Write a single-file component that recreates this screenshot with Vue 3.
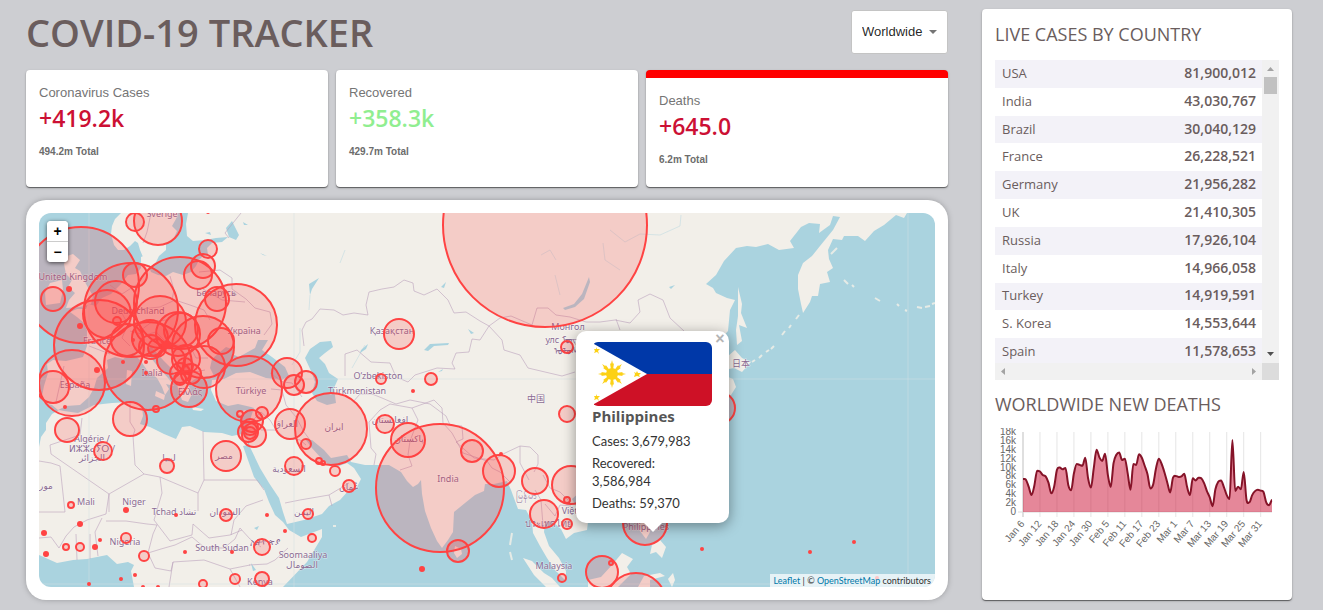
<script setup>
import { computed, ref } from 'vue'

const region = ref('Worldwide')

const cards = [
  { title: 'Coronavirus Cases', value: '+419.2k', total: '494.2m Total', tone: 'bad' },
  { title: 'Recovered', value: '+358.3k', total: '429.7m Total', tone: 'good' },
  { title: 'Deaths', value: '+645.0', total: '6.2m Total', tone: 'bad', active: true },
]

const countries = [
  ['USA', '81,900,012'],
  ['India', '43,030,767'],
  ['Brazil', '30,040,129'],
  ['France', '26,228,521'],
  ['Germany', '21,956,282'],
  ['UK', '21,410,305'],
  ['Russia', '17,926,104'],
  ['Italy', '14,966,058'],
  ['Turkey', '14,919,591'],
  ['S. Korea', '14,553,644'],
  ['Spain', '11,578,653'],
]

// Land masses, drawn over the water background.
const land = [
  // Scandinavia
  'M121 213L115 219 112 226 111 234 114 245 118 250 124 250 130 246 135 241 138 243 140 250 143 257 146 264 152 267 156 262 159 256 166 250 166 243 173 240 177 231 172 226 176 219 178 213Z',
  // Eurasia
  'M188 213L186 224 187 236 193 241 205 240 216 238 228 237 222 242 212 243 207 248 208 255 203 256 199 260 196 266 191 272 183 275 173 272 166 276 158 275 151 272 147 262 148 254 141 257 141 268 136 274 128 275 121 284 111 294 102 298 96 306 88 304 86 309 77 309 70 312 77 317 83 322 87 330 87 346 83 357 66 361 53 360 47 364 48 373 44 386 42 396 44 403 52 405 58 410 66 406 80 405 89 397 94 388 97 378 108 368 107 360 115 357 123 359 133 353 140 360 147 370 157 378 162 387 165 395 169 389 166 384 174 386 168 378 159 368 151 358 147 350 151 346 156 352 163 360 171 368 175 378 178 388 182 400 188 402 192 394 188 384 195 379 207 376 214 376 210 368 212 359 220 352 226 347 235 350 232 354 239 357 246 353 255 348 258 340 268 340 262 350 272 357 285 367 289 376 282 380 266 378 250 372 236 373 224 379 212 380 211 390 216 401 228 406 238 404 251 407 254 408 250 420 247 434 250 447 260 468 269 483 279 498 283 512 287 524 304 520 322 514 329 506 340 500 349 490 357 487 361 479 354 468 347 463 339 466 330 466 321 458 311 447 306 440 312 440 324 450 331 458 347 455 351 462 365 465 389 465 401 472 407 481 413 487 418 484 421 480 422 494 425 511 431 528 437 541 442 548 448 540 453 532 454 512 465 503 475 495 484 491 485 484 494 484 507 481 511 490 518 509 526 510 532 521 533 533 540 546 547 558 555 570 566 581 566 571 559 558 549 546 544 532 545 522 552 521 561 529 566 539 574 533 587 530 588 522 577 508 572 499 580 492 600 486 640 460 640 430 690 400 702 360 728 331 730 310 735 300 727 298 716 293 713 288 706 284 716 275 724 261 736 248 747 246 756 247 768 244 779 250 794 248 790 241 801 227 809 223 820 224 819 233 830 225 833 216 840 217 833 230 820 246 812 256 803 263 798 275 798 289 801 304 803 313 810 302 812 296 818 296 820 284 830 282 827 272 833 268 829 259 828 250 833 239 842 240 844 236 858 236 865 241 874 231 884 225 896 215 904 218 907 213Z',
  // Africa
  'M39 447L41 437 46 430 46 423 52 414 59 410 64 411 78 413 94 405 112 403 131 402 142 406 143 416 140 424 150 427 164 434 176 439 182 427 190 426 204 432 222 433 232 436 242 434 248 437 248 445 243 446 254 477 264 489 269 502 275 515 283 522 289 530 301 537 322 529 322 537 307 562 283 587 134 587 131 571 134 565 128 562 117 564 107 555 87 559 73 560 57 563 39 555Z',
  // Islands
  'M73 254L67 256 64 264 66 274 72 280 68 287 75 293 69 300 66 308 80 307 91 304 93 296 86 284 80 271 75 268 80 260Z',
  'M50 283L62 280 63 290 60 303 46 305 45 293Z',
  'M738 287L742 304 741 313 747 328 739 325 742 341 737 345 736 330 738 316Z',
  'M735 350L742 358 751 362 742 372 734 368 729 369 728 356Z',
  'M728 377L733 379 736 387 731 395 728 396Z',
  'M455 546L461 549 462 554 457 558 454 553Z',
  'M523 558L532 561 544 573 552 578 560 587 546 587 534 575Z',
  'M588 580L601 577 612 565 622 553 633 559 627 567 631 574 618 587 588 587Z',
  'M638 587L644 576 660 573 665 576 650 580 650 587Z',
  'M637 520L648 520 650 532 646 539 640 531Z',
  'M652 545L660 540 666 547 662 558 656 552 650 554Z',
  'M668 579L673 573 675 580 672 587Z',
  'M156 391L165 395 164 400 155 396ZM127 370L132 371 131 386 126 384ZM192 407L204 409 201 411 193 410ZM237 413L246 410 242 416Z',
]

const lakes = [
  'M305 358L310 349 320 342 331 341 333 347 325 353 319 358 325 364 329 373 338 379 334 388 336 403 327 405 317 401 312 393 315 382 311 371Z',
  'M424 350L430 344 449 343 448 345 434 346 428 351ZM563 308L574 304 582 294 589 277 590 282 584 299 575 307 565 310Z',
  'M226 228L232 221 239 235 236 240 229 237ZM205 233L210 232 211 235ZM243 222L248 225 244 225ZM260 253L267 256 263 255ZM234 291L237 295 231 296Z',
  'M309 284L319 278 312 289 310 295ZM361 350L368 344 366 349 360 353ZM468 329L474 333 471 334ZM441 287L446 282 444 288ZM438 372L443 369 442 371ZM251 563L256 570 253 571ZM669 287L675 285 671 289Z',
  'M634 565L639 569 632 572ZM254 528L259 526 257 530Z',
]

const borders = [
  'M304 346L302 330 306 322 312 319 320 309 334 310 343 315 354 313 368 315 366 305 369 292 382 289 394 287 404 280 413 283 414 291 424 295 437 289 448 300 454 313 466 312 480 321 489 326 480 340 472 339 469 352 456 353 452 363 455 369 437 368 415 375 408 382 396 377 390 363 371 362 357 350 345 354 345 376',
  'M489 326L500 318 511 316 532 325 537 308 548 308 556 315 570 317 586 322 600 322 615 320 630 323 640 312 638 300 650 294 663 300 670 318 684 331',
  'M489 326L502 340 504 350 520 355 528 368 545 372 562 376 575 372',
  'M39 512L65 512 60 466 51 463 39 461M51 454L109 494 144 474 160 477 198 493 198 511M109 494L106 514 87 520 74 527 66 536 59 548 51 537 39 538M109 494L109 512M133 436L135 465 144 474M198 493L204 480 257 480 264 490M203 431L204 480M160 477L162 493 154 520 170 541 192 535 193 524',
  'M106 521L126 521 147 524 157 525 153 534 148 553 161 549 175 545 192 537 205 548 224 548 235 539 240 528 250 539 261 547M148 553L155 568 171 571 173 562 204 560 230 569 250 565M76 534L77 560M90 534L90 559M102 518L95 532 98 556M193 524L209 538 230 535 242 530',
  'M51 454L50 445 80 435 82 418M130 403L130 422 135 430 133 436M231 535L234 520 246 506 263 500M173 562L169 587M230 569L240 587M249 565L267 564 275 560 288 548',
  'M353 402L360 394 372 394 382 398 396 404 410 400 430 404 446 416 450 425 462 426 463 439 456 442 474 458 494 460 503 454 520 446 530 447 538 455 538 464 534 472',
  'M369 422L380 410 390 404 412 408 418 420 410 441 408 455 412 466 400 470M412 408L434 400 442 408 443 423 452 433 458 444M458 444L463 453 487 461 492 468 500 472 510 482M369 422L371 448 376 454 374 465',
  'M261 412L270 420 276 430 285 438 300 440 306 445M261 412L252 421 258 430 250 440M276 430L261 430M285 503L300 500 329 495 349 483M329 495L332 506M271 389L282 390 286 405 296 417 304 432 310 440',
  'M140 309L160 307 175 300 190 305 204 310 210 320M170 276L174 290 172 300M199 272L220 270 232 278 232 289 246 299 255 308 270 312 272 324 264 335M120 310L128 324 122 338 130 346M89 346L110 354M130 331L145 335 156 332 166 342 176 345 190 346 196 358 208 358M141 330L153 321 168 320M64 366L60 384 56 402M110 285L122 294 136 285M203 289L222 300 245 302M157 332L156 343 170 350M177 377L186 367 195 372 205 370',
  'M151 213L147 232 143 243M241 213L225 233 229 238M543 475L550 488 560 492 568 500M545 504L555 516 560 505 571 506M620 330L616 319M535 490L541 500 543 525M270 373L283 382 292 383 302 397M520 446L520 463 529 480',
]

const labels = [
  ['Sverige', 162, 217], ['United Kingdom', 73, 280], ['Deutschland', 138, 314], ['France', 97, 344],
  ['España', 75, 388], ['Italia', 152, 376], ['Беларусь', 216, 296], ['Україна', 244, 334],
  ['Türkiye', 251, 394], ['Ελλάς', 190, 395], ['Algérie /', 92, 442], ['ⵍⵣⵣⴰⵢⵔ /', 92, 452],
  ['الجزائر', 92, 461], ['ليبيا', 169, 461], ['مصر', 224, 459], ['مور', 46, 489], ['Mali', 86, 505],
  ['Niger', 134, 505], ['Tchad تشاد', 174, 515], ['السودان', 225, 515], ['Nigeria', 125, 545],
  ['South Sudan', 222, 551], ['Kenya', 260, 585], ['ኢትዮጵያ', 265, 545], ['Қазақстан', 392, 334],
  ['O‘zbekiston', 378, 379], ['Türkmenistan', 357, 394], ['افغانستان', 390, 423], ['پاکستان', 409, 442],
  ['ایران', 334, 430], ['العراق', 286, 427], ['السعودية', 289, 472], ['عُمان', 349, 490], ['اليمن', 304, 515],
  ['India', 448, 482], ['Soomaaliya', 303, 558], ['الصومال', 302, 568], ['Монгол', 568, 330],
  ['улс ᠮᠣᠩ', 562, 343], ['ᠤᠯᠤᠰ', 566, 354], ['中国', 536, 402], ['日本', 741, 367],
  ['မြန်မာ', 526, 499], ['ประเทศไทย', 548, 527], ['Việt Nam', 581, 514], ['Malaysia', 554, 569], ['Philippines', 646, 530],
]

// x, y and radius of every case marker.
const markers = [
  [545, 225, 102], [81, 285, 58], [131, 310, 47], [158, 221, 24], [135, 222, 9], [180, 303, 46], [236, 325, 41],
  [99, 345, 45], [72, 383, 33], [53, 387, 16], [148, 366, 44], [53, 299, 12], [135, 275, 12], [116, 302, 21],
  [107, 314, 24], [160, 322, 26], [127, 340, 16], [150, 338, 18], [178, 334, 22], [203, 347, 31], [117, 321, 4],
  [157, 348, 9], [151, 347, 12], [171, 360, 14], [186, 359, 14], [204, 367, 21], [180, 373, 10], [191, 374, 10],
  [180, 379, 6], [185, 366, 8], [189, 389, 18], [181, 330, 17], [221, 341, 13], [217, 299, 12], [198, 275, 14],
  [203, 266, 12], [208, 249, 9], [249, 389, 33], [287, 373, 15], [294, 385, 10], [306, 382, 11], [399, 334, 15],
  [381, 379, 5], [431, 379, 6], [331, 429, 36], [290, 424, 15], [306, 444, 5], [319, 461, 3], [323, 463, 2],
  [294, 466, 9], [335, 471, 5], [349, 486, 6], [308, 514, 5], [312, 538, 4], [385, 424, 9], [408, 440, 17],
  [440, 488, 64], [472, 451, 11], [499, 471, 16], [458, 551, 11], [535, 481, 13], [544, 514, 14], [571, 485, 19],
  [567, 500, 3], [567, 524, 5], [567, 414, 8], [567, 347, 6], [719, 408, 16], [645, 523, 22], [602, 572, 16],
  [611, 563, 2], [562, 578, 4], [636, 603, 30], [67, 430, 12], [103, 451, 9], [130, 419, 17], [156, 409, 3],
  [167, 466, 7], [226, 456, 15], [252, 421, 11], [262, 413, 6], [240, 414, 3], [248, 432, 10], [254, 435, 12],
  [250, 427, 8], [250, 433, 6], [71, 505, 3], [226, 515, 6], [66, 547, 3], [80, 547, 4], [126, 538, 5],
  [144, 556, 5], [262, 547, 8], [262, 579, 7], [235, 579, 5], [203, 584, 4],
]

const dots = [
  [69, 289, 3], [80, 326, 3], [97, 370, 3], [123, 362, 2], [146, 362, 2], [146, 373, 2], [133, 340, 2],
  [208, 212, 2], [65, 407, 2], [126, 510, 3], [176, 515, 2], [267, 515, 2], [80, 524, 3], [44, 533, 3],
  [46, 554, 3], [95, 547, 3], [100, 540, 2], [185, 552, 2], [232, 552, 2], [89, 584, 2], [121, 579, 2],
  [135, 575, 2], [143, 587, 2], [158, 587, 2], [285, 531, 2], [413, 391, 2], [501, 454, 2], [422, 569, 3],
  [702, 549, 2], [810, 552, 2], [854, 542, 2], [877, 578, 2], [167, 345, 4],
]

// Daily new deaths in thousands, from Jan 6 on.
const deaths = [
  7.4, 7.3, 5.7, 3.8, 5.9, 9.3, 9.1, 8.3, 8, 6.6, 4.2, 5.7, 9.5, 10, 9.6, 9.9, 6.1, 4.9, 8.7, 10.8, 10.6, 10.4,
  12.2, 7.6, 5.5, 9.8, 14, 12.3, 11.5, 13.1, 8.3, 5.6, 11, 12.9, 13.4, 11.7, 12, 8.7, 5, 10.8, 10.6, 13, 12.2,
  10.4, 8.5, 5.3, 6.2, 9.8, 12, 10.8, 8.9, 6.6, 4.4, 7.7, 8.1, 7.9, 8, 8.6, 5.6, 3.8, 7.6, 7.1, 7.7, 7.6, 6.5,
  4.7, 3.3, 1.3, 5.1, 6.8, 7.1, 5.6, 3.8, 2.9, 16.2, 4.7, 5.7, 5.1, 9, 2.7, 2.2, 3.8, 4.7, 5, 4.8, 4.5, 2.1,
  1.5, 2.7,
]
const dates = ['Jan 6', 'Jan 12', 'Jan 18', 'Jan 24', 'Jan 30', 'Feb 5', 'Feb 11', 'Feb 17', 'Feb 23', 'Mar 1', 'Mar 7', 'Mar 13', 'Mar 19', 'Mar 25', 'Mar 31']
const ticks = [18, 16, 14, 12, 10, 8, 6, 4, 2, 0]

const left = 28
const base = 84
const px = (day) => left + (day * 249) / 88
const py = (value) => base - (value * 80) / 18

const line = computed(() => {
  const p = deaths.map((v, i) => [px(i), py(v)])
  let d = `M${p[0][0]} ${p[0][1]}`
  for (let i = 0; i < p.length - 1; i++) {
    const a = p[Math.max(i - 1, 0)]
    const b = p[i]
    const c = p[i + 1]
    const e = p[Math.min(i + 2, p.length - 1)]
    // Level the curve at peaks and dips so that it never overshoots.
    const sb = (b[1] - a[1]) * (c[1] - b[1]) > 0 ? (c[1] - a[1]) / 6 : 0
    const sc = (c[1] - b[1]) * (e[1] - c[1]) > 0 ? (e[1] - b[1]) / 6 : 0
    const dx = (c[0] - b[0]) / 3
    d += `C${b[0] + dx} ${b[1] + sb} ${c[0] - dx} ${c[1] - sc} ${c[0]} ${c[1]}`
  }
  return d
})
const area = computed(() => `${line.value}L${px(88)} ${base}L${left} ${base}Z`)
</script>

<template>
  <div class="app">
    <main class="main">
      <header class="header">
        <h1>COVID-19 TRACKER</h1>
        <div class="picker">
          <select v-model="region" aria-label="Region">
            <option>Worldwide</option>
            <option v-for="c in countries" :key="c[0]">{{ c[0] }}</option>
          </select>
          <svg class="caret" width="8" height="4" viewBox="0 0 8 4" aria-hidden="true"><path d="M0 0H8L4 4Z" fill="#757575" /></svg>
        </div>
      </header>

      <section class="cards">
        <article v-for="c in cards" :key="c.title" class="card" :class="[c.tone, { active: c.active }]">
          <p class="card-title">{{ c.title }}</p>
          <h2>{{ c.value }}</h2>
          <p class="card-total">{{ c.total }}</p>
        </article>
      </section>

      <section class="map-card">
        <div class="map">
          <svg class="world" viewBox="39 213 896 374" preserveAspectRatio="xMidYMid slice" role="img" aria-label="Map of cases">
            <rect x="39" y="213" width="896" height="374" fill="#aad3df" />
            <path v-for="(d, i) in land" :key="'l' + i" :d="d" fill="#f2efe9" />
            <path v-for="(d, i) in lakes" :key="'w' + i" :d="d" fill="#aad3df" />
            <path class="isles" d="M799 315L796 319M791 325L789 328M785 331L782 335M774 346L771 349M769 350L766 352M762 355L759 358M755 360L752 362M844 280L848 284M852 285L854 287M875 298L880 301M897 304L899 306M905 310L907 311M917 307L922 308M925 307L930 306M932 304L935 303M831 254L837 248M333 526L336 526M512 533L510 545M510 552L512 560" />
            <path class="rivers" d="M292 365L300 352 300 328M310 295L309 310M340 263L345 250M352 368L365 345M610 230L625 242 640 234 660 235 680 226 681 215M603 243L605 260 620 270M541 255L550 250 556 260M555 275L560 295" />
            <path v-for="(d, i) in borders" :key="'b' + i" class="border" :d="d" />
            <path d="M39 379H935M39 584H935M89 213V587M294 213V587M908 213V587" stroke="#d6e0e6" stroke-opacity=".5" fill="none" />
            <g class="labels">
              <text v-for="l in labels" :key="l[0]" :x="l[1]" :y="l[2]">{{ l[0] }}</text>
            </g>
            <g class="markers">
              <circle v-for="(m, i) in markers" :key="'m' + i" :cx="m[0]" :cy="m[1]" :r="m[2]" />
            </g>
            <circle v-for="(m, i) in dots" :key="'d' + i" :cx="m[0]" :cy="m[1]" :r="m[2]" fill="#ff4343" />
          </svg>

          <div class="zoom">
            <button type="button" aria-label="Zoom in">+</button>
            <button type="button" aria-label="Zoom out">−</button>
          </div>

          <div class="popup">
            <button class="close" type="button" aria-label="Close popup">×</button>
            <svg class="flag" viewBox="0 0 120 64" aria-label="Flag of the Philippines" role="img">
              <rect width="120" height="64" fill="#fff" />
              <path d="M2 0H120V32H55L2 2Z" fill="#0038a8" />
              <path d="M2 64H120V32H55L2 62Z" fill="#ce1126" />
              <g fill="#fcd116">
                <circle cx="20" cy="32" r="6" />
                <path
                  v-for="turn in [0, 45, 90, 135, 180, 225, 270, 315]"
                  :key="turn"
                  d="M19 28L18 21 19 22 20 18 21 22 22 21 21 28Z"
                  :transform="`rotate(${turn} 20 32)`"
                />
                <path d="M4 5L5 7 8 7 6 9 7 12 5 10 2 11 3 9 2 7 4 7ZM4 52L5 54 8 54 6 56 7 59 5 57 2 58 3 56 2 54 4 54ZM45 29L46 31 49 31 47 33 48 35 45 34 42 35 43 32 42 30 44 31Z" />
              </g>
            </svg>
            <h3>Philippines</h3>
            <p>Cases: 3,679,983</p>
            <p class="two-line">Recovered: 3,586,984</p>
            <p>Deaths: 59,370</p>
          </div>

          <div class="credit">
            <a href="#leaflet">Leaflet</a> | © <a href="#osm">OpenStreetMap</a> contributors
          </div>
        </div>
      </section>
    </main>

    <aside class="side">
      <h2>LIVE CASES BY COUNTRY</h2>
      <div class="list">
        <div class="rows">
          <table>
            <tbody>
              <tr v-for="c in countries" :key="c[0]">
                <th scope="row">{{ c[0] }}</th>
                <td>{{ c[1] }}</td>
              </tr>
            </tbody>
          </table>
        </div>
        <div class="bar vertical" aria-hidden="true">
          <svg width="7" height="4" viewBox="0 0 7 4"><path d="M0 4H7L3.5 0Z" fill="#a3a3a3" /></svg>
          <span class="thumb"></span>
          <svg class="down" width="7" height="4" viewBox="0 0 7 4"><path d="M0 0H7L3.5 4Z" fill="#505050" /></svg>
        </div>
        <div class="bar horizontal" aria-hidden="true">
          <svg width="4" height="7" viewBox="0 0 4 7"><path d="M4 0V7L0 3.5Z" fill="#a3a3a3" /></svg>
          <svg width="4" height="7" viewBox="0 0 4 7"><path d="M0 0V7L4 3.5Z" fill="#a3a3a3" /></svg>
        </div>
        <div class="corner"></div>
      </div>

      <h2>WORLDWIDE NEW DEATHS</h2>
      <svg class="chart" viewBox="0 0 284 130" role="img" aria-label="Worldwide new deaths per day">
        <path v-for="(d, i) in dates" :key="d" :d="`M${px(i * 6)} 4V89`" :stroke="i ? '#e5e5e5' : '#bfbfbf'" />
        <path :d="`M23 ${base}H277`" stroke="#d9d9d9" />
        <path :d="area" fill="#cc1034" fill-opacity=".5" />
        <path :d="line" fill="none" stroke="#851328" stroke-width="2" stroke-linejoin="round" />
        <text v-for="t in ticks" :key="t" x="21" :y="py(t) + 3" text-anchor="end">{{ t ? t + 'k' : 0 }}</text>
        <text v-for="(d, i) in dates" :key="'t' + d" text-anchor="end" :transform="`translate(${px(i * 6) + 2} 96) rotate(-50)`">{{ d }}</text>
      </svg>
    </aside>
  </div>
</template>

<style>
body {
  background: #cdced2;
}
</style>

<style scoped>
* {
  box-sizing: border-box;
  margin: 0;
}

.app {
  display: grid;
  grid-template-columns: minmax(0, 1fr) 310px;
  gap: 34px;
  padding: 9px 31px 10px 26px;
  color: #6a5d5d;
  font-family: "Open Sans", "Noto Sans", sans-serif;
}

.header {
  display: flex;
  justify-content: space-between;
  align-items: center;
  height: 45px;
}

h1 {
  font-size: 38px;
  line-height: 44px;
  font-weight: 600;
}

.picker {
  position: relative;
}

.picker select {
  appearance: none;
  width: 97px;
  height: 44px;
  padding: 0 24px 0 10px;
  border: 1px solid #c4c4c4;
  border-radius: 3px;
  background: #fff;
  color: rgba(0, 0, 0, 0.87);
  font: 13px "Liberation Sans", sans-serif;
}

.caret {
  position: absolute;
  right: 11px;
  top: 20px;
  pointer-events: none;
}

.cards {
  display: flex;
  gap: 8px;
  margin-top: 16px;
}

.card {
  flex: 1;
  height: 117px;
  padding: 13px;
  border-radius: 4px;
  background: #fff;
  box-shadow: 0 1px 1px rgba(0, 0, 0, 0.5), 0 1px 3px rgba(0, 0, 0, 0.15);
  font-family: "Liberation Sans", sans-serif;
  color: #757575;
}

.card.active {
  border-top: 8px solid #f00;
}

.card-title {
  font-size: 13px;
  line-height: 20px;
}

.card h2 {
  margin-top: 3px;
  font-family: "Open Sans", sans-serif;
  font-size: 23px;
  line-height: 24px;
  font-weight: 600;
}

.bad h2 {
  color: #cc1034;
}

.good h2 {
  color: lightgreen;
}

.card-total {
  margin-top: 14px;
  font-size: 10px;
  line-height: 16px;
  font-weight: 700;
  color: #6c6c6c;
}

.map-card {
  margin-top: 13px;
  padding: 13px;
  border-radius: 20px;
  background: #fff;
  box-shadow: 0 0 6px -1px rgba(0, 0, 0, 0.35);
}

.map {
  position: relative;
  height: 374px;
  overflow: hidden;
  border-radius: 12px;
}

.world {
  display: block;
  width: 100%;
  height: 100%;
}

.border {
  fill: none;
  stroke: #bba2bd;
  stroke-opacity: 0.6;
  stroke-linejoin: round;
}

.rivers {
  fill: none;
  stroke: #aad3df;
  stroke-opacity: 0.4;
}

.isles {
  fill: none;
  stroke: #e6ebe6;
  stroke-width: 2px;
}

.labels text {
  fill: #8a6a92;
  stroke: #fff;
  stroke-width: 1px;
  stroke-opacity: 0.5;
  paint-order: stroke;
  text-anchor: middle;
  font: 9px "Noto Sans", "DejaVu Sans", "Noto Sans CJK SC", sans-serif;
}

.markers circle {
  fill: #ff4343;
  fill-opacity: 0.2;
  stroke: #ff4343;
  stroke-width: 2px;
}

.zoom {
  position: absolute;
  top: 8px;
  left: 8px;
  display: flex;
  flex-direction: column;
  overflow: hidden;
  border-radius: 4px;
  background: #fff;
  box-shadow: 0 1px 4px rgba(0, 0, 0, 0.65);
}

.zoom button {
  width: 21px;
  height: 20px;
  padding: 0;
  border: 0;
  background: #fff;
  color: #000;
  font: 700 14px/20px "Liberation Sans", sans-serif;
}

.zoom button + button {
  height: 21px;
  border-top: 1px solid #ccc;
}

.popup {
  position: absolute;
  bottom: 64px;
  left: calc(50% + 89px);
  width: 153px;
  height: 192px;
  padding: 11px 16px;
  border-radius: 10px;
  background: #fff;
  box-shadow: 0 3px 14px rgba(0, 0, 0, 0.4);
  color: #333;
}

.popup::after {
  content: "";
  position: absolute;
  top: 100%;
  left: 68px;
  border: 9px solid transparent;
  border-top-color: #fff;
  border-bottom: 0;
}

.close {
  position: absolute;
  top: 0;
  right: 0;
  width: 18px;
  height: 16px;
  padding: 0;
  border: 0;
  background: none;
  color: #b5b5b5;
  font: 700 16px/16px "Liberation Sans", sans-serif;
}

.flag {
  display: block;
  width: 120px;
  height: 64px;
  border-radius: 6px;
}

.popup h3 {
  font-size: 15px;
  line-height: 20px;
  font-weight: 700;
  color: #555;
}

.popup p {
  margin-top: 4px;
  font-family: Lato, sans-serif;
  font-size: 13px;
  line-height: 18px;
}

.popup h3 + p {
  margin-top: 6px;
}

.popup .two-line {
  width: 90px;
}

.credit {
  position: absolute;
  right: 0;
  bottom: 0;
  height: 13px;
  padding: 0 4px;
  background: rgba(255, 255, 255, 0.7);
  color: #333;
  font-family: Lato, sans-serif;
  font-size: 9px;
  line-height: 13px;
}

.credit a {
  color: #0078a8;
  text-decoration: none;
}

.side {
  padding: 13px;
  border-radius: 4px;
  background: #fff;
  box-shadow: 0 1px 1px rgba(0, 0, 0, 0.5), 0 1px 3px rgba(0, 0, 0, 0.15);
}

.side h2 {
  font-size: 18px;
  line-height: 24px;
  font-weight: 400;
}

.list {
  display: grid;
  grid-template: 303px 17px / minmax(0, 1fr) 17px;
  margin: 14px 0 12px;
}

.rows {
  overflow: hidden;
}

table {
  width: 100%;
  height: 306px;
  border-collapse: collapse;
  font-size: 13px;
  line-height: 18px;
}

tr:nth-child(odd) {
  background: #f3f2f8;
}

th,
td {
  padding: 0 6px 2px 7px;
  text-align: left;
  font-weight: 400;
}

td {
  text-align: right;
  font-size: 14px;
  font-weight: 600;
}

.bar {
  display: flex;
  align-items: center;
  background: #f1f1f1;
}

.vertical {
  flex-direction: column;
  padding: 7px 0;
}

.thumb {
  width: 13px;
  height: 17px;
  margin-top: 6px;
  background: #c1c1c1;
}

.down {
  margin-top: auto;
}

.horizontal {
  justify-content: space-between;
  padding: 0 6px;
}

.corner {
  background: #dcdcdc;
}

.chart {
  display: block;
  width: 100%;
  margin-top: 12px;
  font: 10px "Liberation Sans", sans-serif;
  fill: #666;
}
</style>
